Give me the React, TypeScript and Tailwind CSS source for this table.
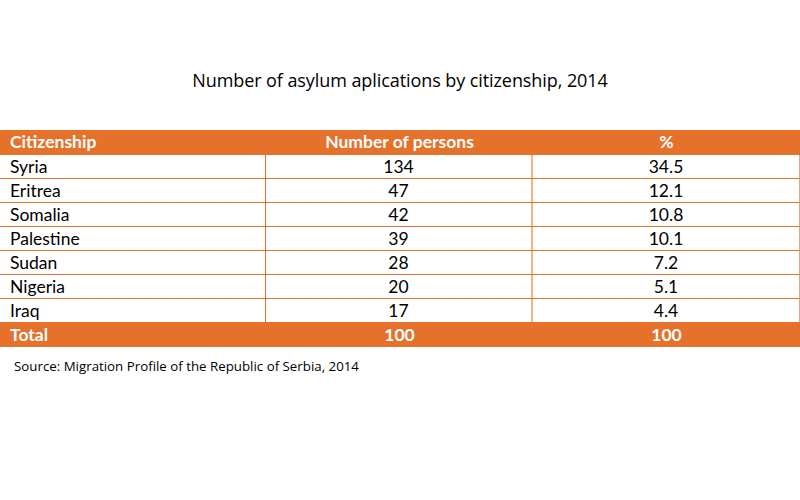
import React from 'react';

type Row = { country: string; count: string; pct: string };

const rows: Row[] = [
  { country: 'Syria', count: '134', pct: '34.5' },
  { country: 'Eritrea', count: '47', pct: '12.1' },
  { country: 'Somalia', count: '42', pct: '10.8' },
  { country: 'Palestine', count: '39', pct: '10.1' },
  { country: 'Sudan', count: '28', pct: '7.2' },
  { country: 'Nigeria', count: '20', pct: '5.1' },
  { country: 'Iraq', count: '17', pct: '4.4' }
];

const App: React.FC = () => {
  return (
    <div className="w-[800px] h-[500px] bg-white text-black font-['Open_Sans',sans-serif]">
      <h1 className="pt-[68px] h-[130px] text-center text-[18px] leading-[24px] tracking-[-0.08px]">
        Number of asylum aplications by citizenship, 2014
      </h1>

      <div className="font-['Lato',sans-serif] text-[17.5px]">
        <div className="grid grid-cols-[266px_267px_1fr] h-[25px] bg-[#e5712b] text-white font-bold items-center leading-none pb-[2px]">
          <div className="pl-[10px]">Citizenship</div>
          <div className="text-center">Number of persons</div>
          <div className="text-center">%</div>
        </div>

        {rows.map((r, i) => (
          <div
            key={r.country}
            className={`grid grid-cols-[266px_267px_1fr] items-stretch leading-none border-r border-r-[#e9a47a] ${i === 0 ? 'h-[23px]' : 'h-[24px] border-t border-t-[#e5712b]'}`}
          >
            <div className="pl-[10px] flex items-center border-r border-r-[#e5712b]">{r.country}</div>
            <div className="flex items-center justify-center border-r-2 border-r-[#f3b48c]">{r.count}</div>
            <div className="flex items-center justify-center">{r.pct}</div>
          </div>
        ))}

        <div className="grid grid-cols-[266px_267px_1fr] h-[25px] bg-[#e5712b] text-white font-bold items-center leading-none">
          <div className="pl-[10px]">Total</div>
          <div className="text-center">100</div>
          <div className="text-center">100</div>
        </div>
      </div>

      <p className="pl-[14px] pt-[10px] text-[13.3px] leading-[18px]">
        Source: Migration Profile of the Republic of Serbia, 2014
      </p>
    </div>
  );
};

export default App;
